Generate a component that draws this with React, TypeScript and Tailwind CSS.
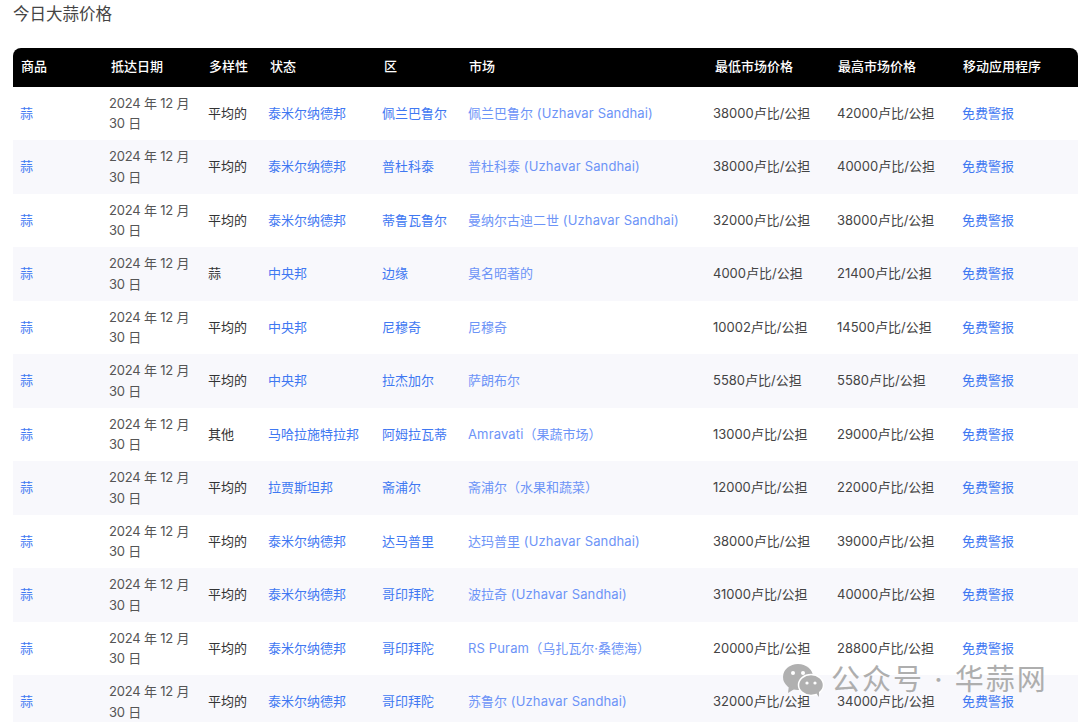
const rows = [
  ["平均的", "泰米尔纳德邦", "佩兰巴鲁尔", "佩兰巴鲁尔 (Uzhavar Sandhai)", "38000", "42000"],
  ["平均的", "泰米尔纳德邦", "普杜科泰", "普杜科泰 (Uzhavar Sandhai)", "38000", "40000"],
  ["平均的", "泰米尔纳德邦", "蒂鲁瓦鲁尔", "曼纳尔古迪二世 (Uzhavar Sandhai)", "32000", "38000"],
  ["蒜", "中央邦", "边缘", "臭名昭著的", "4000", "21400"],
  ["平均的", "中央邦", "尼穆奇", "尼穆奇", "10002", "14500"],
  ["平均的", "中央邦", "拉杰加尔", "萨朗布尔", "5580", "5580"],
  ["其他", "马哈拉施特拉邦", "阿姆拉瓦蒂", "Amravati（果蔬市场）", "13000", "29000"],
  ["平均的", "拉贾斯坦邦", "斋浦尔", "斋浦尔（水果和蔬菜）", "12000", "22000"],
  ["平均的", "泰米尔纳德邦", "达马普里", "达玛普里 (Uzhavar Sandhai)", "38000", "39000"],
  ["平均的", "泰米尔纳德邦", "哥印拜陀", "波拉奇 (Uzhavar Sandhai)", "31000", "40000"],
  ["平均的", "泰米尔纳德邦", "哥印拜陀", "RS Puram（乌扎瓦尔·桑德海）", "20000", "28800"],
  ["平均的", "泰米尔纳德邦", "哥印拜陀", "苏鲁尔 (Uzhavar Sandhai)", "32000", "34000"],
];
const heads = [
  ["商品", "pl-2 rounded-tl-lg"],
  ["抵达日期", "pl-[9px]"],
  ["多样性", "pl-2"],
  ["状态", "pl-[9px]"],
  ["区", "pl-[9px]"],
  ["市场", "pl-2"],
  ["最低市场价格", "pl-[9px]"],
  ["最高市场价格", "pl-2"],
  ["移动应用程序", "pl-2 rounded-tr-lg"],
];
const widths = [89, 99, 60, 114, 86, 245, 124, 125, 123];
const link = "text-[#3f78f2]";

function Market({ text }: { text: string }) {
  const parts = text.split(/([A-Za-z() ]*[A-Za-z)]+)/);
  return (
    <>
      {parts.map((p, i) =>
        i % 2 === 1 ? (
          <span key={i} className="tracking-[0.15px]">
            {p}
          </span>
        ) : (
          <span key={i}>{p}</span>
        ),
      )}
    </>
  );
}

export default function App() {
  return (
    <div className="relative h-[722px] w-[1080px] overflow-hidden bg-white font-['Inter','Noto_Sans_CJK_SC',sans-serif] text-[13px] text-[#444]">
      <h1 className="pl-[13px] pt-[2px] text-[16.5px] font-normal leading-[24px] text-[#444]">今日大蒜价格</h1>
      <table className="ml-[13px] mt-[22px] w-[1065px] table-fixed border-collapse">
        <colgroup>
          {widths.map((w, i) => (
            <col key={i} style={{ width: w }} />
          ))}
        </colgroup>
        <thead>
          <tr className="h-[38.5px]">
            {heads.map(([h, c]) => (
              <th key={h} className={`bg-black pb-[1px] text-left text-[13px] font-medium text-white ${c}`}>
                {h}
              </th>
            ))}
          </tr>
        </thead>
        <tbody>
          {rows.map((r, i) => (
            <tr key={i} className="h-[53.5px] even:bg-[#f8f8fc]">
              <td className={`pl-[7px] ${link}`}>蒜</td>
              <td className="pl-[7px] pr-1 leading-[20.5px] tracking-[-0.2px] text-[#555]">2024 年 12 月 30 日</td>
              <td className="pl-[7px] text-[#333]">{r[0]}</td>
              <td className={`pl-[7px] ${link}`}>{r[1]}</td>
              <td className={`pl-[7px] ${link}`}>{r[2]}</td>
              <td className="pl-[7px] text-[#6d94f7]">
                <Market text={r[3]} />
              </td>
              <td className="pl-[7px] text-[#444]">{r[4]}卢比/公担</td>
              <td className="pl-[7px] text-[#444]">{r[5]}卢比/公担</td>
              <td className={`pl-[7px] ${link}`}>免费警报</td>
            </tr>
          ))}
        </tbody>
      </table>
      <div className="absolute left-[782px] top-[661px] flex items-center gap-[7px] text-[#aeaeae]">
        <svg width="42" height="34" viewBox="0 0 42 34" fill="#b0b0b0">
          <ellipse cx="16" cy="14" rx="15" ry="13" />
          <path d="M7 22 L6 30 L14 25 Z" />
          <ellipse cx="29" cy="22" rx="12.5" ry="10.5" stroke="#fff" strokeWidth="1.5" />
          <path d="M34 30 L37 34 L37 27 Z" />
          <circle cx="11" cy="10" r="2" fill="#fff" />
          <circle cx="21" cy="10" r="2" fill="#fff" />
          <circle cx="25" cy="20" r="1.6" fill="#fff" />
          <circle cx="33" cy="20" r="1.6" fill="#fff" />
        </svg>
        <span className="whitespace-nowrap text-[29px] leading-[38px] tracking-[2px]">公众号 · 华蒜网</span>
      </div>
    </div>
  );
}
